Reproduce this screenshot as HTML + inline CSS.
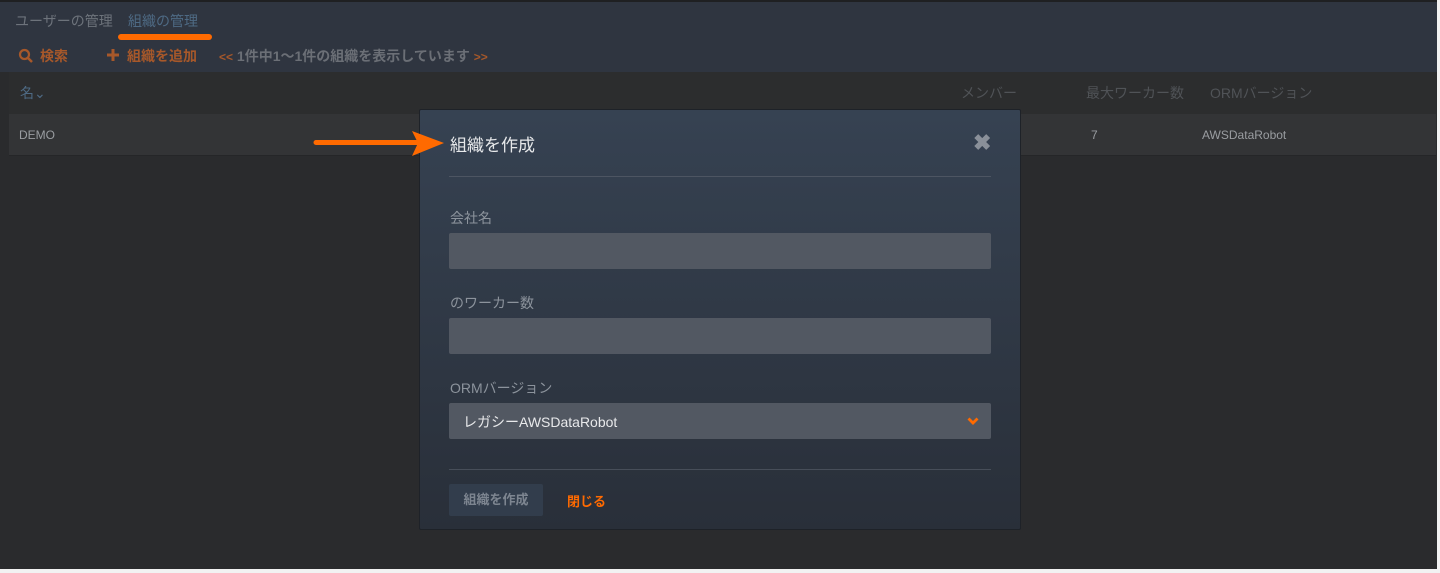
<!DOCTYPE html>
<html><head><meta charset="utf-8"><style>
*{box-sizing:border-box;margin:0;padding:0}
body{width:1440px;height:573px;background:#f2f2f2;font-family:"Liberation Sans","Noto Sans CJK JP",sans-serif;position:relative;overflow:hidden}
.app{position:absolute;left:0;top:0;width:1437px;height:569px;background:#2a2b2d;border-top:2px solid #1f2022}
.top{position:absolute;left:0;top:0;width:100%;height:70px;background:#2f3540}
.t{position:absolute;white-space:nowrap}
.o{color:#a7582a;font-weight:bold;font-size:14px}
.mod{position:absolute;left:419px;top:109px;width:602px;height:421px;background:linear-gradient(#364252,#292f39);border:1px solid #1e2228;border-radius:2px}
.lbl{position:absolute;left:30px;color:#8c939c;font-size:14px}
.inp{position:absolute;left:29px;width:542px;height:36px;background:#525862;border-radius:2px}
</style></head><body>
<div class="app">
<div class="top"></div>
<div class="t" style="left:15px;top:9px;color:#6d737b;font-size:14px">ユーザーの管理</div>
<div class="t" style="left:128px;top:9px;color:#4e6a84;font-size:14px">組織の管理</div>
<div style="position:absolute;left:118px;top:32px;width:94px;height:6px;background:#ff6a00;border-radius:3px"></div>
<svg style="position:absolute;left:18px;top:46px" width="16" height="16" viewBox="0 0 16 16"><circle cx="6.5" cy="6.5" r="4.5" fill="none" stroke="#a7582a" stroke-width="2.2"/><line x1="10" y1="10" x2="14" y2="14" stroke="#a7582a" stroke-width="2.5"/></svg>
<div class="t o" style="left:40px;top:44px">検索</div>
<svg style="position:absolute;left:107px;top:47px" width="12" height="12" viewBox="0 0 12 12"><path d="M6 0v12M0 6h12" stroke="#a7582a" stroke-width="3"/></svg>
<div class="t o" style="left:127px;top:44px">組織を追加</div>
<div class="t" style="left:219px;top:44px;font-size:14px;font-weight:bold;color:#6b6f76"><span style="color:#a7582a;font-size:12px">&lt;&lt;</span> 1件中1〜1件の組織を表示しています <span style="color:#a7582a;font-size:12px">&gt;&gt;</span></div>
<div style="position:absolute;left:9px;top:70px;width:1427px;height:42px;background:#2c2d2e"></div>
<div class="t" style="left:20px;top:81px;color:#4e6a84;font-size:14px">名⌄</div>
<div class="t" style="left:961px;top:81px;color:#505357;font-size:14px">メンバー</div>
<div class="t" style="left:1086px;top:81px;color:#505357;font-size:14px">最大ワーカー数</div>
<div class="t" style="left:1210px;top:81px;color:#505357;font-size:14px">ORMバージョン</div>
<div style="position:absolute;left:9px;top:112px;width:1427px;height:42px;background:#333436;border-bottom:1px solid #252628"></div>
<div class="t" style="left:19px;top:126px;color:#9a9da1;font-size:12px">DEMO</div>
<div class="t" style="left:1091px;top:126px;color:#9a9da1;font-size:12px">7</div>
<div class="t" style="left:1202px;top:126px;color:#9a9da1;font-size:12px">AWSDataRobot</div>
</div>
<div class="mod">
<div class="t" style="left:30px;top:21px;color:#e6e8ea;font-size:17px">組織を作成</div>
<div class="t" style="left:553px;top:20px;color:#8a9099;font-size:22px;font-weight:bold">✖</div>
<div style="position:absolute;left:29px;top:66px;width:542px;height:1px;background:#4d5562"></div>
<div class="lbl" style="top:98px">会社名</div>
<div class="inp" style="top:123px"></div>
<div class="lbl" style="top:183px">のワーカー数</div>
<div class="inp" style="top:208px"></div>
<div class="lbl" style="top:268px">ORMバージョン</div>
<div class="inp" style="top:293px"><span class="t" style="left:14px;top:9px;color:#e8e9eb;font-size:14px">レガシーAWSDataRobot</span>
<svg style="position:absolute;right:12px;top:14px" width="12" height="9" viewBox="0 0 12 9"><path d="M1.5 1.5L6 6l4.5-4.5" fill="none" stroke="#ff6a00" stroke-width="2.8"/></svg></div>
<div style="position:absolute;left:29px;top:359px;width:542px;height:1px;background:#474e59"></div>
<div style="position:absolute;left:29px;top:374px;width:94px;height:32px;background:#323d4c;border-radius:2px;color:#7d8590;font-size:13px;font-weight:bold;text-align:center;line-height:32px">組織を作成</div>
<div class="t" style="left:147px;top:381px;color:#ff6a00;font-size:13px;font-weight:bold">閉じる</div>
</div>
<svg style="position:absolute;left:310px;top:128px" width="135" height="32" viewBox="0 0 135 32"><line x1="6" y1="14.5" x2="110" y2="14.5" stroke="#ff6a00" stroke-width="5" stroke-linecap="round"/><path d="M102 3L134 15L102 28L108 15Z" fill="#ff6a00"/></svg>
</body></html>
